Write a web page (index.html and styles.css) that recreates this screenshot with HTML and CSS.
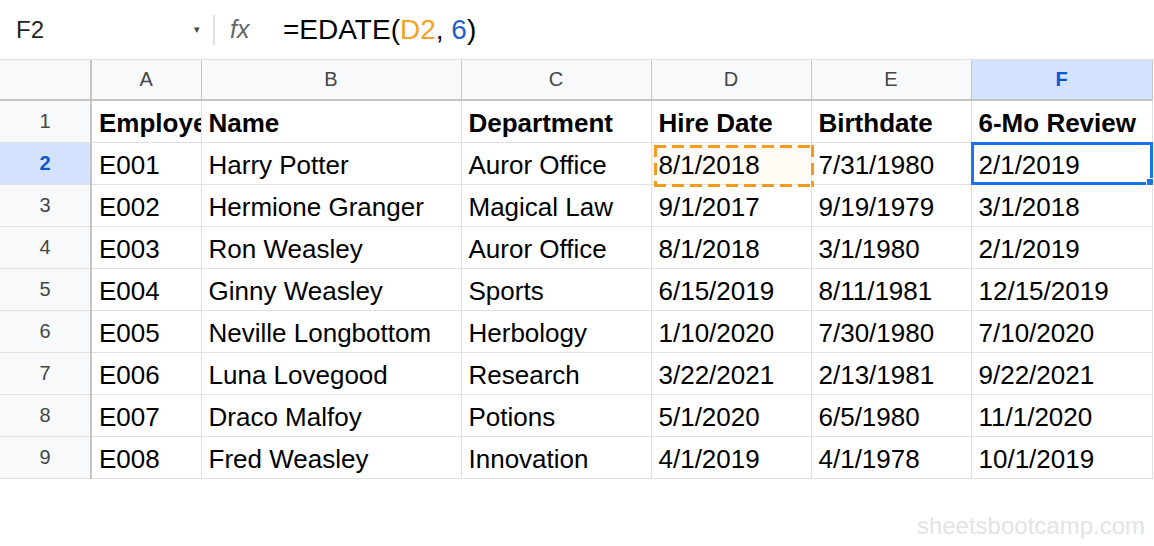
FILE: index.html
```html
<!DOCTYPE html>
<html lang="en">
<head>
    <meta charset="UTF-8">
    <meta name="viewport" content="width=device-width, initial-scale=1.0">
    <title>EDATE Example</title>
    <link rel="stylesheet" href="styles.css">
</head>
<body>
    <div class="formula-bar">
        <div class="name-box">
            <span class="cell-ref">F2</span>
            <span class="caret">&#9662;</span>
        </div>
        <div class="fx">fx</div>
        <div class="formula">=EDATE(<span class="ref">D2</span>, <span class="num">6</span>)</div>
    </div>

    <table class="sheet">
        <colgroup>
            <col class="c-row">
            <col class="c-a">
            <col class="c-b">
            <col class="c-c">
            <col class="c-d">
            <col class="c-e">
            <col class="c-f">
        </colgroup>
        <thead>
            <tr>
                <th class="corner"></th>
                <th>A</th>
                <th>B</th>
                <th>C</th>
                <th>D</th>
                <th>E</th>
                <th class="active">F</th>
            </tr>
        </thead>
        <tbody>
            <tr class="bold">
                <th>1</th>
                <td class="clip">Employee ID</td>
                <td>Name</td>
                <td>Department</td>
                <td>Hire Date</td>
                <td>Birthdate</td>
                <td>6-Mo Review</td>
            </tr>
            <tr>
                <th class="active">2</th>
                <td>E001</td>
                <td>Harry Potter</td>
                <td>Auror Office</td>
                <td class="copied"><span class="dash"></span>8/1/2018</td>
                <td>7/31/1980</td>
                <td class="selected"><span class="sel-box"><span class="handle"></span></span>2/1/2019</td>
            </tr>
            <tr>
                <th>3</th>
                <td>E002</td>
                <td>Hermione Granger</td>
                <td>Magical Law</td>
                <td>9/1/2017</td>
                <td>9/19/1979</td>
                <td>3/1/2018</td>
            </tr>
            <tr>
                <th>4</th>
                <td>E003</td>
                <td>Ron Weasley</td>
                <td>Auror Office</td>
                <td>8/1/2018</td>
                <td>3/1/1980</td>
                <td>2/1/2019</td>
            </tr>
            <tr>
                <th>5</th>
                <td>E004</td>
                <td>Ginny Weasley</td>
                <td>Sports</td>
                <td>6/15/2019</td>
                <td>8/11/1981</td>
                <td>12/15/2019</td>
            </tr>
            <tr>
                <th>6</th>
                <td>E005</td>
                <td>Neville Longbottom</td>
                <td>Herbology</td>
                <td>1/10/2020</td>
                <td>7/30/1980</td>
                <td>7/10/2020</td>
            </tr>
            <tr>
                <th>7</th>
                <td>E006</td>
                <td>Luna Lovegood</td>
                <td>Research</td>
                <td>3/22/2021</td>
                <td>2/13/1981</td>
                <td>9/22/2021</td>
            </tr>
            <tr>
                <th>8</th>
                <td>E007</td>
                <td>Draco Malfoy</td>
                <td>Potions</td>
                <td>5/1/2020</td>
                <td>6/5/1980</td>
                <td>11/1/2020</td>
            </tr>
            <tr>
                <th>9</th>
                <td>E008</td>
                <td>Fred Weasley</td>
                <td>Innovation</td>
                <td>4/1/2019</td>
                <td>4/1/1978</td>
                <td>10/1/2019</td>
            </tr>
        </tbody>
    </table>

    <div class="watermark">sheetsbootcamp.com</div>
</body>
</html>
```

FILE: styles.css
```css
body {
    margin: 0;
    font-family: "Liberation Sans", Arial, sans-serif;
    background-color: #fff;
    color: #000;
    width: 1154px;
    height: 546px;
    overflow: hidden;
    position: relative;
}

/* formula bar */
.formula-bar {
    display: flex;
    align-items: center;
    height: 59px;
    border-bottom: 1px solid #e1e1e1;
}

.name-box {
    display: flex;
    align-items: center;
    justify-content: space-between;
    width: 185px;
    height: 30px;
    padding-left: 16px;
    padding-right: 12px;
    border-right: 2px solid #e1e1e1;
}

.cell-ref {
    font-size: 24px;
    color: #1f1f1f;
}

.caret {
    font-size: 11px;
    color: #444;
    margin-right: 1px;
}

.fx {
    font-style: italic;
    font-size: 25px;
    color: #666;
    padding-left: 15px;
    width: 38px;
}

.formula {
    font-size: 28px;
    padding-left: 15px;
    color: #000;
}

.formula .ref {
    color: #f4a125;
}

.formula .num {
    color: #1f5fc8;
}

/* grid */
.sheet {
    border-collapse: collapse;
    table-layout: fixed;
    width: 1152px;
}

.c-row { width: 91px; }
.c-a { width: 110px; }
.c-b { width: 260px; }
.c-c { width: 190px; }
.c-d { width: 160px; }
.c-e { width: 160px; }
.c-f { width: 181px; }

.sheet th {
    background-color: #f8f9fa;
    color: #444746;
    font-weight: normal;
    border: 1px solid #c7c7c7;
    padding: 0;
}

.sheet thead th {
    height: 39px;
    font-size: 20px;
    border-top: none;
    border-bottom: 2px solid #c4c4c4;
}

.sheet thead th.corner {
    border-left: none;
    border-right: 2px solid #c4c4c4;
}

.sheet tbody th {
    font-size: 20px;
    border-left: none;
    border-right: 2px solid #c4c4c4;
    border-top-color: #e1e1e1;
    border-bottom-color: #e1e1e1;
}

.sheet th.active {
    background-color: #d3e3fd;
    color: #0b57d0;
    font-weight: bold;
}

.sheet td {
    height: 38px;
    padding: 3px 7px 0;
    font-size: 26px;
    border: 1px solid #e1e1e1;
    white-space: nowrap;
    position: relative;
}

.sheet tr.bold td {
    font-weight: bold;
}

.sheet td.clip {
    overflow: hidden;
    text-overflow: clip;
    padding-right: 0;
}

.copied {
    background-color: #fffaf3;
}

.dash {
    position: absolute;
    top: 2px;
    left: 2px;
    right: -3px;
    bottom: -3px;
    background:
        repeating-linear-gradient(90deg, #f29b21 0 12px, transparent 12px 18px) top left / 100% 3px no-repeat,
        repeating-linear-gradient(90deg, #f29b21 0 12px, transparent 12px 18px) bottom left / 100% 3px no-repeat,
        repeating-linear-gradient(180deg, #f29b21 0 12px, transparent 12px 18px) top left / 3px 100% no-repeat,
        repeating-linear-gradient(180deg, #f29b21 0 12px, transparent 12px 18px) top right / 3px 100% no-repeat;
}

.sel-box {
    position: absolute;
    top: -1px;
    left: -1px;
    right: -1px;
    bottom: -1px;
    border: 3px solid #1a73e8;
}

.handle {
    position: absolute;
    right: -4px;
    bottom: -4px;
    width: 6px;
    height: 6px;
    background-color: #1a73e8;
    border: 1px solid #fff;
}

.watermark {
    position: absolute;
    right: 9px;
    bottom: 6px;
    font-size: 24px;
    color: #e3e3e3;
}
```
